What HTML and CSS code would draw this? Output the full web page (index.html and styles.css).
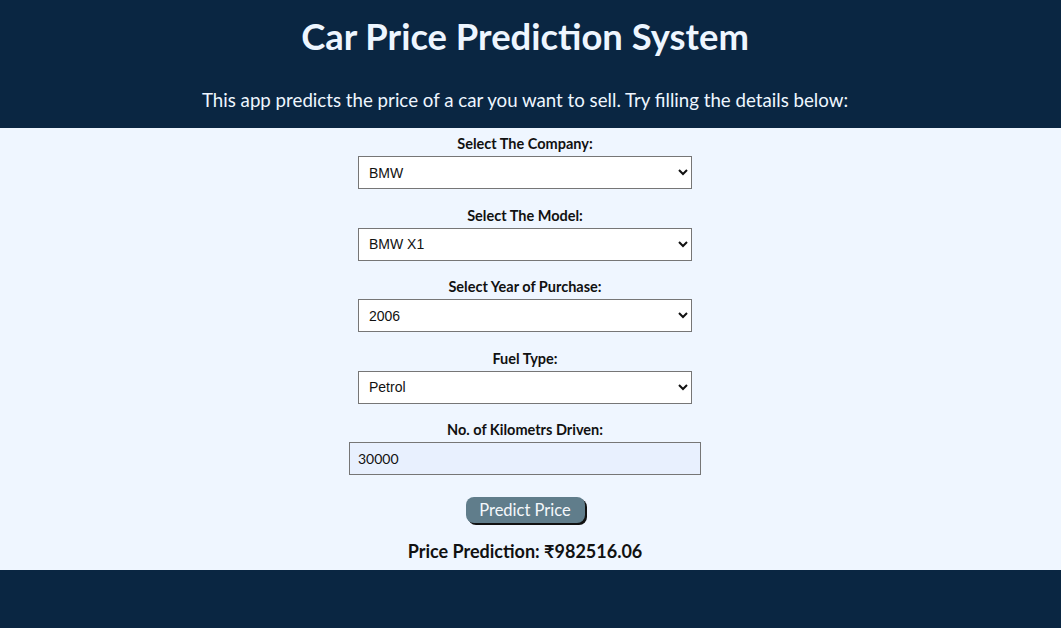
FILE: index.html
```html
<!DOCTYPE html>
<html>
<head>
<meta charset="utf-8">
<link rel="stylesheet" href="styles.css">
</head>
<body>
<header class="hero">
  <h1 class="hero-title">Car Price Prediction System</h1>
  <p class="hero-sub">This app predicts the price of a car you want to sell. Try filling the details below:</p>
</header>
<main class="content">
  <form class="form">
    <div class="field">
      <label class="field-label">Select The Company:</label>
      <select class="field-select"><option>BMW</option></select>
    </div>
    <div class="field">
      <label class="field-label">Select The Model:</label>
      <select class="field-select"><option>BMW X1</option></select>
    </div>
    <div class="field">
      <label class="field-label">Select Year of Purchase:</label>
      <select class="field-select"><option>2006</option></select>
    </div>
    <div class="field">
      <label class="field-label">Fuel Type:</label>
      <select class="field-select"><option>Petrol</option></select>
    </div>
    <div class="field">
      <label class="field-label">No. of Kilometrs Driven:</label>
      <input class="field-input" type="text" value="30000">
    </div>
    <button type="button" class="predict-btn">Predict Price</button>
    <div class="result">Price Prediction: ₹982516.06</div>
  </form>
</main>
<footer class="footer"></footer>
</body>
</html>
```
FILE: styles.css
```css
html, body {
  margin: 0;
  padding: 0;
}
body {
  background: #0a2642;
  font-family: Lato, "Noto Sans", sans-serif;
}
.hero {
  background: #0a2642;
  color: #eef6ff;
  text-align: center;
  height: 128px;
  box-sizing: border-box;
  padding: 13px 11px 0 0;
}
.hero-title {
  margin: 0;
  font-size: 36.4px;
  line-height: 46px;
  font-weight: 700;
}
.hero-sub {
  margin: 29px 0 0;
  font-size: 18.7px;
  line-height: 24px;
  font-weight: 400;
}
.content {
  background: #eff6ff;
  height: 442px;
  box-sizing: border-box;
  padding: 7px 11px 0 0;
}
.form {
  display: flex;
  flex-direction: column;
  align-items: center;
}
.field {
  display: flex;
  flex-direction: column;
  align-items: center;
  margin-bottom: 17.5px;
}
.field-label {
  font-size: 14.5px;
  line-height: 18px;
  font-weight: 700;
  color: #111;
  margin-bottom: 3px;
}
.field-select {
  width: 334px;
  height: 33px;
  box-sizing: border-box;
  border: 1px solid #767676;
  border-radius: 0;
  background: #fff;
  font-family: "Liberation Sans", Arial, sans-serif;
  font-size: 14px;
  padding: 0 6px;
  color: #111;
}
.field-input {
  width: 352px;
  height: 33px;
  box-sizing: border-box;
  border: 1px solid #767676;
  background: #e8f0fe;
  font-family: Lato, "Noto Sans", sans-serif;
  font-size: 14px;
  padding: 0 8px;
  color: #111;
}
.predict-btn {
  margin-top: 4px;
  width: 119px;
  height: 26px;
  background: #607d8b;
  color: #f4f8fb;
  border: none;
  border-radius: 8px;
  box-shadow: 2px 2px 0 #111;
  font-family: Lato, "Noto Sans", sans-serif;
  font-size: 16.5px;
  padding: 0;
}
.result {
  margin-top: 17px;
  font-size: 18px;
  font-weight: 700;
  color: #111;
}
.footer {
  background: #0a2642;
  height: 58px;
}
```
